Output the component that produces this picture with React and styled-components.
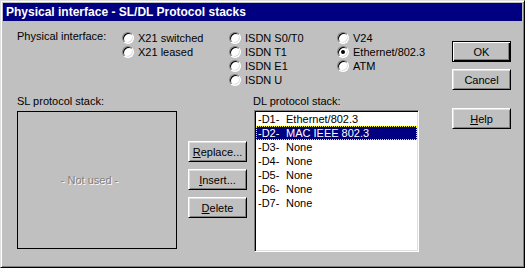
import React from 'react';
import styled, { createGlobalStyle } from 'styled-components';

const GlobalStyle = createGlobalStyle`
  html, body {
    margin: 0;
    padding: 0;
    background: #c0c0c0;
  }
  body {
    font-family: "Liberation Sans", Arial, sans-serif;
    font-size: 11px;
    color: #000;
  }
`;

const Window = styled.div`
  width: 525px;
  height: 268px;
  box-sizing: border-box;
  background: #c0c0c0;
  border: 1px solid;
  border-color: #dfdfdf #000 #000 #dfdfdf;
  box-shadow: inset 1px 1px #fff, inset -1px -1px #808080;
  padding: 2px;
  display: flex;
  flex-direction: column;
`;

const TitleBar = styled.div`
  height: 18px;
  flex-shrink: 0;
  background: #000080;
  color: #fff;
  font-weight: bold;
  font-size: 12px;
  line-height: 18px;
  padding-left: 3px;
  white-space: nowrap;
`;

const Body = styled.div`
  flex: 1;
  display: flex;
  padding: 8px 11px 0 14px;
`;

const Main = styled.div`
  flex: 1;
  display: flex;
  flex-direction: column;
`;

const Side = styled.div`
  width: 59px;
  display: flex;
  flex-direction: column;
  padding-top: 12px;
`;

const RadioSection = styled.div`
  display: flex;
`;

const Label = styled.div`
  line-height: 14px;
  white-space: nowrap;
  width: ${p => p.$width || 'auto'};
  margin-left: ${p => p.$shift || 0};
`;

const RadioColumn = styled.div`
  width: ${p => p.$width};
  margin-top: 2px;
  display: flex;
  flex-direction: column;
`;

const RadioItem = styled.label`
  display: flex;
  align-items: center;
  height: 14px;
  white-space: nowrap;
`;

const RadioCircle = styled.span`
  width: 12px;
  height: 12px;
  box-sizing: border-box;
  border-radius: 50%;
  background: #fff;
  border: 1px solid;
  border-color: #808080 #fff #fff #808080;
  box-shadow: inset 1px 1px #000, inset -1px -1px #dfdfdf;
  margin-right: 4px;
  display: flex;
  align-items: center;
  justify-content: center;
  flex-shrink: 0;

  &::after {
    content: '';
    width: 4px;
    height: 4px;
    border-radius: 50%;
    background: #000;
    display: ${p => (p.$checked ? 'block' : 'none')};
  }
`;

const LowerRow = styled.div`
  display: flex;
  margin-top: 7px;
`;

const Group = styled.div`
  width: ${p => p.$width};
  display: flex;
  flex-direction: column;
`;

const EmptyStack = styled.div`
  margin-top: 3px;
  height: 138px;
  box-sizing: border-box;
  border: 1px solid #000;
  padding-right: 15px;
  display: flex;
  align-items: center;
  justify-content: center;
  color: #808080;
  text-shadow: 1px 1px #fff;
`;

const ActionColumn = styled.div`
  width: 59px;
  margin: 0 7px 0 11px;
  padding-top: 47px;
  display: flex;
  flex-direction: column;
  gap: 7px;
`;

const Button = styled.button`
  width: 59px;
  height: 21px;
  box-sizing: border-box;
  padding: 0;
  font: inherit;
  color: #000;
  background: #c0c0c0;
  border: 1px solid;
  border-color: #fff #000 #000 #fff;
  box-shadow: ${p =>
    p.$default
      ? 'inset 1px 1px #fff, inset -1px -1px #000, inset -2px -2px #808080'
      : 'inset 1px 1px #dfdfdf, inset -1px -1px #808080'};
  ${p => p.$default && 'border-color: #000;'}
  margin-top: ${p => p.$gap || 0};
  cursor: pointer;

  u {
    text-decoration: underline;
  }
`;

const ListBox = styled.div`
  margin-top: 2px;
  height: 142px;
  box-sizing: border-box;
  background: #fff;
  border: 1px solid;
  border-color: #808080 #fff #fff #808080;
  box-shadow: inset 1px 1px #000, inset -1px -1px #dfdfdf;
  padding: 1px;
`;

const ListRow = styled.div`
  height: 14px;
  line-height: 14px;
  padding-left: 2px;
  display: flex;
  white-space: nowrap;
  background: ${p => (p.$selected ? '#000080' : 'transparent')};
  color: ${p => (p.$selected ? '#fff' : '#000')};
  outline: ${p => (p.$selected ? '1px dotted #ffff00' : 'none')};
  outline-offset: -1px;
`;

const Code = styled.span`
  width: 28px;
  flex-shrink: 0;
`;

const radioColumns = [
  { width: '107px', items: [{ label: 'X21 switched' }, { label: 'X21 leased' }] },
  {
    width: '108px',
    items: [{ label: 'ISDN S0/T0' }, { label: 'ISDN T1' }, { label: 'ISDN E1' }, { label: 'ISDN U' }],
  },
  {
    width: 'auto',
    items: [{ label: 'V24' }, { label: 'Ethernet/802.3', checked: true }, { label: 'ATM' }],
  },
];

const dlStack = [
  { code: '-D1-', name: 'Ethernet/802.3' },
  { code: '-D2-', name: 'MAC IEEE 802.3', selected: true },
  { code: '-D3-', name: 'None' },
  { code: '-D4-', name: 'None' },
  { code: '-D5-', name: 'None' },
  { code: '-D6-', name: 'None' },
  { code: '-D7-', name: 'None' },
];

export default function App() {
  return (
    <>
      <GlobalStyle />
      <Window>
        <TitleBar>Physical interface - SL/DL Protocol stacks</TitleBar>
        <Body>
          <Main>
            <RadioSection>
              <Label $width="105px">Physical interface:</Label>
              {radioColumns.map((col, i) => (
                <RadioColumn key={i} $width={col.width}>
                  {col.items.map(item => (
                    <RadioItem key={item.label}>
                      <RadioCircle $checked={item.checked} />
                      {item.label}
                    </RadioItem>
                  ))}
                </RadioColumn>
              ))}
            </RadioSection>

            <LowerRow>
              <Group $width="160px">
                <Label>SL protocol stack:</Label>
                <EmptyStack>- Not used -</EmptyStack>
              </Group>

              <ActionColumn>
                <Button><u>R</u>eplace...</Button>
                <Button><u>I</u>nsert...</Button>
                <Button><u>D</u>elete</Button>
              </ActionColumn>

              <Group $width="165px">
                <Label $shift="-1px">DL protocol stack:</Label>
                <ListBox>
                  {dlStack.map(row => (
                    <ListRow key={row.code} $selected={row.selected}>
                      <Code>{row.code}</Code>
                      {row.name}
                    </ListRow>
                  ))}
                </ListBox>
              </Group>
            </LowerRow>
          </Main>

          <Side>
            <Button $default>OK</Button>
            <Button $gap="7px">Cancel</Button>
            <Button $gap="18px"><u>H</u>elp</Button>
          </Side>
        </Body>
      </Window>
    </>
  );
}
